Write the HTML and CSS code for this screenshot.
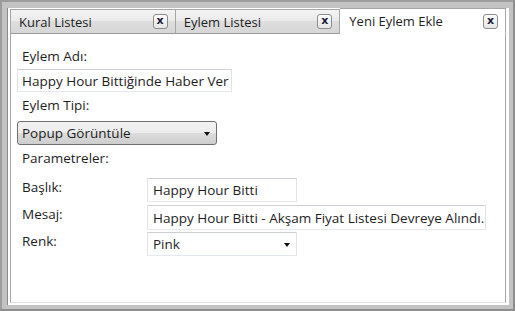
FILE: index.html
```html
<!DOCTYPE html>
<html lang="tr">
<head>
    <meta charset="UTF-8">
    <title>Yeni Eylem Ekle</title>
    <link rel="stylesheet" href="styles.css">
</head>
<body>
    <div class="frame">
        <div class="window">
            <div class="tab-strip">
                <div class="tab">
                    <span>Kural Listesi</span>
                    <span class="close">x</span>
                </div>
                <div class="tab">
                    <span>Eylem Listesi</span>
                    <span class="close">x</span>
                </div>
                <div class="tab active">
                    <span>Yeni Eylem Ekle</span>
                    <span class="close">x</span>
                </div>
            </div>

            <div class="tab-body">
                <div class="label">Eylem Adı:</div>
                <div class="textbox name-box">Happy Hour Bittiğinde Haber Ver</div>

                <div class="label">Eylem Tipi:</div>
                <div class="combo combo-button type-box">
                    <span>Popup Görüntüle</span>
                    <span class="arrow"></span>
                </div>

                <div class="label">Parametreler:</div>
                <div class="params">
                    <div class="label row-label">Başlık:</div>
                    <div class="textbox short">Happy Hour Bitti</div>

                    <div class="label row-label">Mesaj:</div>
                    <div class="textbox long">Happy Hour Bitti - Akşam Fiyat Listesi Devreye Alındı.</div>

                    <div class="label row-label">Renk:</div>
                    <div class="combo combo-plain short">
                        <span>Pink</span>
                        <span class="arrow"></span>
                    </div>
                </div>
            </div>
        </div>
    </div>
</body>
</html>
```

FILE: styles.css
```css
* {
    margin: 0;
    padding: 0;
    box-sizing: border-box;
}

body {
    font-family: "Open Sans", "Noto Sans", sans-serif;
    font-size: 13.5px;
    color: #1e1e1e;
    background: #c3c3c3;
}

.frame {
    width: 515px;
    height: 311px;
    display: flex;
    background: #c3c3c3;
    border: 2px solid #8e8e8e;
    border-top-color: #9c9c9c;
    border-left-color: #9c9c9c;
    padding: 6px 4px 4px 5px;
}

.window {
    flex: 1;
    display: flex;
    flex-direction: column;
    background: #fff;
    border-left: 1px solid #8a8a8a;
    padding: 0 3px 2px 2px;
}

/* tabs */

.tab-strip {
    display: flex;
    height: 26px;
}

.tab {
    flex: 1;
    display: flex;
    align-items: center;
    justify-content: space-between;
    margin-top: 1px;
    padding: 0 7px 0 8px;
    background: linear-gradient(#f4f4f4, #e9e9e9 50%, #dedede 50%, #d6d6d6);
    border: 1px solid #a6a6a6;
    border-bottom-color: #9a9a9a;
    font-size: 13px;
}

.tab + .tab {
    border-left: none;
}

.tab.active {
    margin-top: 0;
    background: #fff;
    border-bottom-color: #fff;
    padding-left: 9px;
}

.close {
    width: 15px;
    height: 15px;
    display: flex;
    align-items: center;
    justify-content: center;
    border: 1px solid #8c8c8c;
    border-radius: 3px;
    background: linear-gradient(#fdfdfd, #e6e6e6);
    font-family: "DejaVu Sans", sans-serif;
    font-size: 11px;
    font-weight: bold;
    line-height: 1;
    color: #1b1b3a;
    padding-bottom: 2px;
}

.tab-body {
    flex: 1;
    border: 1px solid #a6a6a6;
    border-top: none;
    border-bottom-color: #e4e4e4;
    padding: 9px 6px 0 6px;
}

/* form */

.label {
    padding: 5px 5px;
    line-height: 16px;
}

.textbox,
.combo {
    height: 24px;
    display: flex;
    align-items: center;
    padding: 0 5px;
    white-space: nowrap;
    border: 1px solid #e2e3ea;
    border-top-color: #cdd0d8;
    border-bottom-color: #e3e9ef;
    background: #fff;
}

.name-box {
    width: 215px;
    height: 23px;
    padding: 0 3px 0 4px;
}

.combo {
    justify-content: space-between;
    padding-right: 6px;
}

.combo-button {
    width: 200px;
    margin-top: 3px;
    border: 1px solid #707070;
    border-radius: 3px;
    background: linear-gradient(#f3f3f3, #ebebeb 50%, #dddddd 50%, #cdcdcd);
    padding-left: 4px;
}

.arrow {
    width: 0;
    height: 0;
    border-left: 3.5px solid transparent;
    border-right: 3.5px solid transparent;
    border-top: 4px solid #111;
    margin-top: 1px;
}

.params {
    display: grid;
    grid-template-columns: 130px auto;
    grid-auto-rows: 24px;
    row-gap: 3px;
    justify-items: start;
    margin-top: 7px;
}

.row-label {
    padding-top: 1px;
}

.short {
    width: 150px;
}

.long {
    width: 339px;
    height: 25px;
}
```
